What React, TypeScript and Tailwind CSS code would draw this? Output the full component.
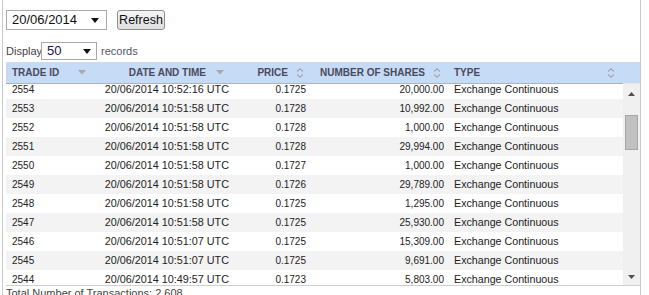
import React from "react";

const rows = [
  ["2554", "20/06/2014 10:52:16 UTC", "0.1725", "20,000.00"],
  ["2553", "20/06/2014 10:51:58 UTC", "0.1728", "10,992.00"],
  ["2552", "20/06/2014 10:51:58 UTC", "0.1728", "1,000.00"],
  ["2551", "20/06/2014 10:51:58 UTC", "0.1728", "29,994.00"],
  ["2550", "20/06/2014 10:51:58 UTC", "0.1727", "1,000.00"],
  ["2549", "20/06/2014 10:51:58 UTC", "0.1726", "29,789.00"],
  ["2548", "20/06/2014 10:51:58 UTC", "0.1725", "1,295.00"],
  ["2547", "20/06/2014 10:51:58 UTC", "0.1725", "25,930.00"],
  ["2546", "20/06/2014 10:51:07 UTC", "0.1725", "15,309.00"],
  ["2545", "20/06/2014 10:51:07 UTC", "0.1725", "9,691.00"],
  ["2544", "20/06/2014 10:49:57 UTC", "0.1723", "5,803.00"],
];

const Down = ({ color = "#a8a8a8" }: { color?: string }) => (
  <svg width="8" height="5" viewBox="0 0 8 5" className="block shrink-0">
    <path d="M0 0 H8 L4 4.5 Z" fill={color} />
  </svg>
);

const Both = () => (
  <svg width="8" height="10" viewBox="0 0 8 10" className="block shrink-0">
    <path d="M1 3.5 L4 0.8 L7 3.5" fill="none" stroke="#8a8a8a" strokeWidth="1" />
    <path d="M1 6.5 L4 9.2 L7 6.5" fill="none" stroke="#8a8a8a" strokeWidth="1" />
  </svg>
);

const Arrow = () => (
  <svg width="8" height="5" viewBox="0 0 8 5" className="block">
    <path d="M0 0 H8 L4 5 Z" fill="#111" />
  </svg>
);

export default function App() {
  return (
    <div
      className="ml-[2px] w-[639px] h-[295px] overflow-hidden border-x border-[#c9c9c9] pl-[3px] text-[#222]"
      style={{ fontFamily: "'Liberation Sans', Arial, sans-serif" }}
    >
      <div className="flex items-center gap-[10px] pt-[10px]">
        <div className="flex h-[20px] w-[101px] items-center justify-between border border-[#a9a9a9] bg-white pl-[5px] pr-[7px] text-[13px] text-[#111]">
          <span>20/06/2014</span>
          <Arrow />
        </div>
        <div className="flex h-[20px] w-[48px] items-center justify-center rounded-[3px] border border-[#8e8e8e] bg-gradient-to-b from-[#f5f5f5] to-[#dedede] text-[12.5px] text-[#111]">
          Refresh
        </div>
      </div>
      <div className="mt-[12px] flex h-[18px] items-center text-[11px]">
        <span className="w-[35px] text-[#444]">Display</span>
        <div className="flex h-[18px] w-[56px] items-center justify-between border border-[#a9a9a9] bg-white pl-[5px] pr-[5px] text-[13px] text-[#141452]">
          <span>50</span>
          <Arrow />
        </div>
        <span className="ml-[4px] text-[#556]">records</span>
      </div>
      <div className="mt-[2px] flex h-[22px] bg-[#c6dbf6] text-[10px] font-bold text-[#4a4a5c]">
        <div className="grid w-[617px] grid-cols-[88px_140px_78px_138px_173px] border-b border-[#a9b4c2]">
          <div className="flex items-center justify-between pl-[6px] pr-[8px]">
            <span>TRADE ID</span>
            <Down />
          </div>
          <div className="flex items-center justify-end gap-[10px] pr-[10px]">
            <span>DATE AND TIME</span>
            <Down />
          </div>
          <div className="flex items-center justify-end gap-[8px] pr-[8px]">
            <span>PRICE</span>
            <Both />
          </div>
          <div className="flex items-center justify-end gap-[8px] pr-[9px]">
            <span>NUMBER OF SHARES</span>
            <Both />
          </div>
          <div className="flex items-center justify-between pl-[4px] pr-[8px]">
            <span>TYPE</span>
            <Both />
          </div>
        </div>
        <div className="w-[17px] border-b border-[#e6e6e6]" />
      </div>
      <div className="flex h-[202px] border-b border-[#cfcfcf]">
        <div className="h-[201px] w-[617px] overflow-hidden">
          <div className="-mt-[4px]">
            {rows.map((r, i) => (
              <div
                key={r[0]}
                className={`grid h-[19px] grid-cols-[88px_140px_78px_138px_173px] items-center text-[10px] ${
                  i % 2 === 1 ? "bg-[#f3f3f3]" : "bg-white"
                }`}
              >
                <div className="pl-[6px]">{r[0]}</div>
                <div className="pr-[5px] text-right text-[10.8px]">{r[1]}</div>
                <div className="pr-[6px] text-right">{r[2]}</div>
                <div className="pr-[6px] text-right">{r[3]}</div>
                <div className="pl-[4px] text-[10.7px]">Exchange Continuous</div>
              </div>
            ))}
          </div>
        </div>
        <div className="flex h-[201px] w-[17px] flex-col items-center bg-[#f0f0f0]">
          <div className="flex h-[19px] items-center justify-center">
            <svg width="7" height="4" viewBox="0 0 7 4" className="block">
              <path d="M0 4 H7 L3.5 0 Z" fill="#505050" />
            </svg>
          </div>
          <div className="mt-[12px] h-[35px] w-[13px] border border-[#a6a6a6] bg-[#c1c1c1]" />
          <div className="flex-1" />
          <div className="flex h-[17px] items-center justify-center">
            <svg width="7" height="4" viewBox="0 0 7 4" className="block">
              <path d="M0 0 H7 L3.5 4 Z" fill="#505050" />
            </svg>
          </div>
        </div>
      </div>
      <div className="pt-[1px] text-[11px] leading-[13px] text-[#444]">Total Number of Transactions: 2,608</div>
    </div>
  );
}
